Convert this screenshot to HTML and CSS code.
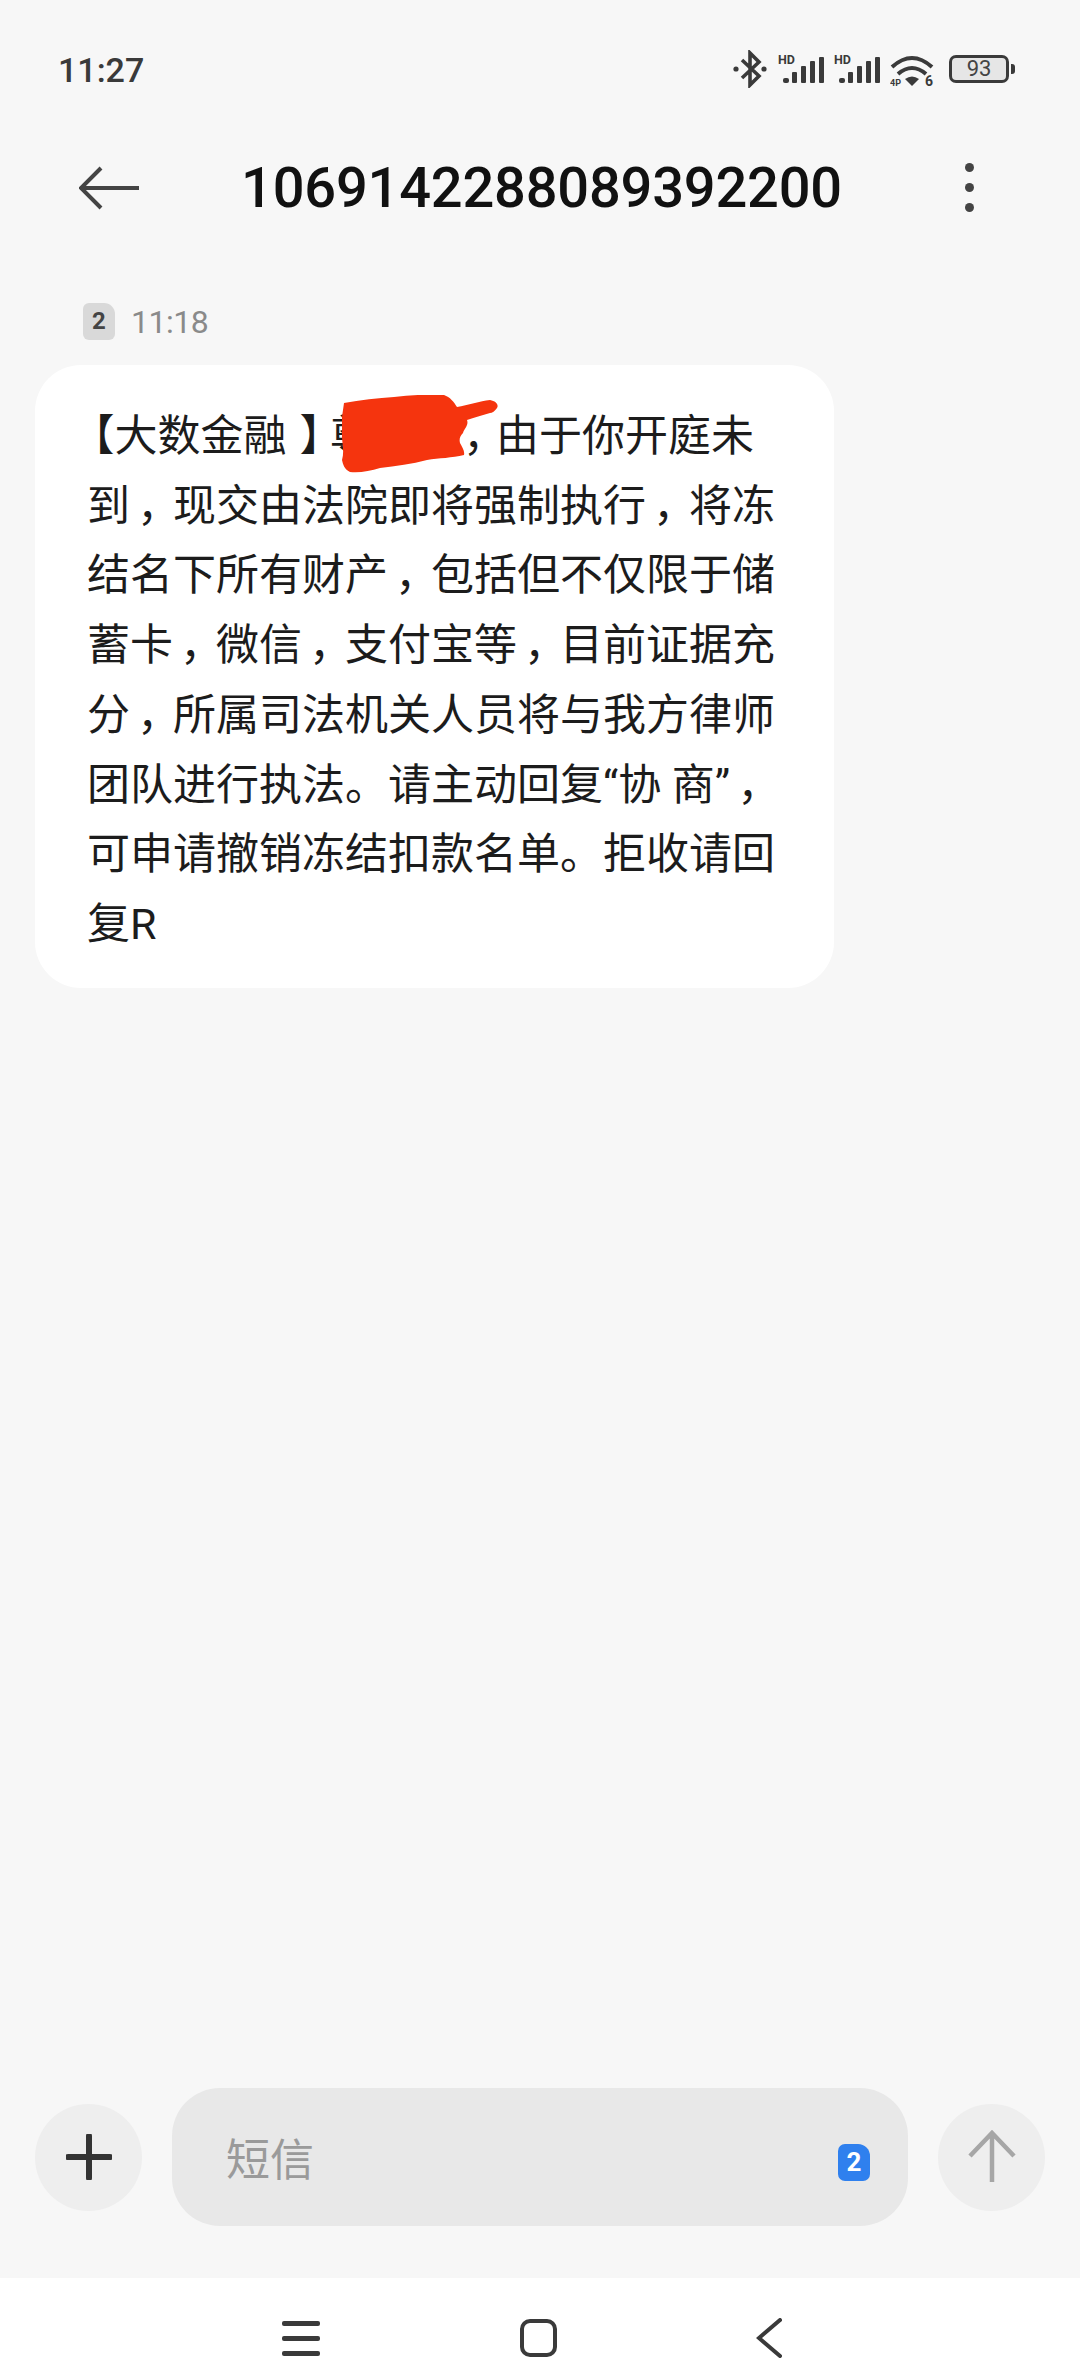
FILE: index.html
```html
<!DOCTYPE html>
<html lang="zh-CN">
<head>
  <meta charset="UTF-8" />
  <title>短信</title>
  <link rel="stylesheet" href="styles.css">
</head>
<body>

  <div class="phone">

    <div class="statusbar">
      <span class="clock">11:27</span>
      <div class="status-icons">
        <svg class="ic-bt" viewBox="0 0 34 38" width="34" height="38">
          <path d="M9 10 L26 26 L17 35 V3 L26 12 L9 28" fill="none" stroke="#3a3a3a" stroke-width="3.6"/>
          <circle cx="3" cy="19" r="2.6" fill="#3a3a3a"/>
          <circle cx="31" cy="19" r="2.6" fill="#3a3a3a"/>
        </svg>
        <svg class="ic-sig" viewBox="0 0 48 34" width="48" height="34">
          <text x="0" y="12" class="tiny-text">HD</text>
          <rect x="5" y="26" width="6" height="5" rx="2" fill="#3a3a3a"/>
          <rect x="14" y="20" width="5" height="11" rx="1" fill="#3a3a3a"/>
          <rect x="23" y="14" width="5" height="17" rx="1" fill="#3a3a3a"/>
          <rect x="32" y="9" width="5" height="22" rx="1" fill="#3a3a3a"/>
          <rect x="41" y="5" width="5" height="26" rx="1" fill="#3a3a3a"/>
        </svg>
        <svg class="ic-sig" viewBox="0 0 48 34" width="48" height="34">
          <text x="0" y="12" class="tiny-text">HD</text>
          <rect x="5" y="26" width="6" height="5" rx="2" fill="#3a3a3a"/>
          <rect x="14" y="20" width="5" height="11" rx="1" fill="#3a3a3a"/>
          <rect x="23" y="14" width="5" height="17" rx="1" fill="#3a3a3a"/>
          <rect x="32" y="9" width="5" height="22" rx="1" fill="#3a3a3a"/>
          <rect x="41" y="5" width="5" height="26" rx="1" fill="#3a3a3a"/>
        </svg>
        <svg class="ic-wifi" viewBox="0 0 46 42" width="46" height="42">
          <path d="M2 19 Q22 1 42 19" fill="none" stroke="#3a3a3a" stroke-width="4"/>
          <path d="M8 26 Q22 14 36 26" fill="none" stroke="#3a3a3a" stroke-width="4"/>
          <path d="M22 38 L15 31 Q22 26 29 31 Z" fill="#3a3a3a"/>
          <text x="0" y="38" class="micro-text">4P</text>
          <text x="35" y="38" class="small-text">6</text>
        </svg>
        <div class="battery">
          <div class="battery-body">93</div>
          <div class="battery-cap"></div>
        </div>
      </div>
    </div>

    <header class="topbar">
      <svg class="back" viewBox="0 0 62 44" width="62" height="44">
        <path d="M22 2 L2 22 L22 42 M2 22 H60" fill="none" stroke="#444" stroke-width="4"/>
      </svg>
      <h1>1069142288089392200</h1>
      <div class="more"><i></i><i></i><i></i></div>
    </header>

    <main class="thread">
      <div class="meta">
        <span class="sim-tag">2</span>
        <span class="time">11:18</span>
      </div>
      <div class="bubble">
        <div class="first-line">
          <span class="lbracket">【</span>大数金融<span class="rbracket">】</span><span class="hidden-name">尊</span><span class="name-comma">，</span>由于你开庭未
          <svg class="scribble" viewBox="0 0 156 78" width="156" height="78">
            <path d="M0 22 L2 8 C18 5 36 3 52 2 C70 0 88 -1 102 0 C108 2 112 7 115 12 C126 10 138 6 148 5 C154 6 157 10 155 13 C153 16 150 18 148 18 C140 20 132 23 125 25 C127 30 122 34 121 38 C118 41 117 44 118 48 C120 52 123 56 122 60 C110 63 97 63 85 65 C70 69 54 71 38 73 C28 76 18 78 8 77 C2 74 1 69 0 65 C3 55 -1 45 0 35 Z" fill="#f5340e"/>
          </svg>
        </div>
        <p>到<span class="cm">，</span>现交由法院即将强制执行<span class="cm">，</span>将冻<br>结名下所有财产<span class="cm">，</span>包括但不仅限于储<br>蓄卡<span class="cm">，</span>微信<span class="cm">，</span>支付宝等<span class="cm">，</span>目前证据充<br>分<span class="cm">，</span>所属司法机关人员将与我方律师<br>团队进行执法。请主动回复“协 商”<span class="cm">，</span><br>可申请撤销冻结扣款名单。拒收请回<br>复R</p>
      </div>
    </main>

    <div class="composer">
      <div class="round-btn">
        <svg viewBox="0 0 46 46" width="46" height="46">
          <path d="M23 2 V44 M2 23 H44" stroke="#333" stroke-width="6" stroke-linecap="round"/>
        </svg>
      </div>
      <div class="input">
        <span class="placeholder">短信</span>
        <span class="sim-badge">2</span>
      </div>
      <div class="round-btn">
        <svg viewBox="0 0 48 54" width="48" height="54">
          <path d="M24 3 V52 M2 26 L24 3 L46 26" fill="none" stroke="#a6a6a6" stroke-width="4.5"/>
        </svg>
      </div>
    </div>

    <nav class="navbar">
      <div class="nav-menu"><i></i><i></i><i></i></div>
      <div class="nav-home"></div>
      <svg class="nav-back" viewBox="0 0 26 40" width="26" height="40">
        <path d="M24 2 L3 20 L24 38" fill="none" stroke="#3a3a3a" stroke-width="4" stroke-linecap="round"/>
      </svg>
    </nav>

  </div>

</body>
</html>
```

FILE: styles.css
```css
* {
  box-sizing: border-box;
}

body {
  margin: 0;
  background: #f7f7f7;
  color: #1c1c1c;
  font-family: Roboto, "Noto Sans CJK SC", sans-serif;
}

.phone {
  width: 1080px;
  height: 2362px;
  display: flex;
  flex-direction: column;
  overflow: hidden;
}

/* Status bar */
.statusbar {
  height: 140px;
  padding: 50px 65px 0 58px;
  display: flex;
  justify-content: space-between;
  align-items: flex-start;
}

.clock {
  font-size: 34px;
  line-height: 40px;
  font-weight: 500;
  color: #3a3a3a;
}

.status-icons {
  display: flex;
  align-items: center;
  gap: 8px;
  height: 38px;
}

.ic-bt {
  margin-right: 3px;
}

.tiny-text {
  font: 700 12.5px Roboto, sans-serif;
  fill: #3a3a3a;
}

.micro-text {
  font: 700 9px Roboto, sans-serif;
  fill: #3a3a3a;
}

.small-text {
  font: 700 14px Roboto, sans-serif;
  fill: #3a3a3a;
}

.battery {
  display: flex;
  align-items: center;
  margin-left: 5px;
}

.battery-body {
  width: 60px;
  height: 28px;
  border: 3px solid #3a3a3a;
  border-radius: 7px;
  background: #e6e6e6;
  font-size: 22px;
  line-height: 22px;
  text-align: center;
  color: #444;
}

.battery-cap {
  width: 4px;
  height: 10px;
  margin-left: 2px;
  background: #3a3a3a;
  border-radius: 0 3px 3px 0;
}

/* Title row */
.topbar {
  height: 95px;
  padding: 0 106px 0 79px;
  display: flex;
  align-items: center;
}

.topbar h1 {
  margin: 0 0 0 100px;
  flex: 1;
  font-size: 56px;
  font-weight: 500;
  letter-spacing: -0.2px;
  color: #111;
  white-space: nowrap;
}

.more {
  display: flex;
  flex-direction: column;
  gap: 11px;
}

.more i {
  display: block;
  width: 9px;
  height: 9px;
  border-radius: 50%;
  background: #444;
}

/* Messages */
.thread {
  flex: 1;
  padding: 68px 0 0 35px;
}

.meta {
  display: flex;
  align-items: center;
  gap: 16px;
  height: 37px;
  margin-left: 48px;
}

.sim-tag {
  width: 32px;
  height: 37px;
  border-radius: 6px 11px 6px 6px;
  background: #d9d9d9;
  color: #444;
  font-size: 24px;
  font-weight: 700;
  line-height: 37px;
  text-align: center;
}

.time {
  font-size: 32px;
  letter-spacing: -0.5px;
  color: #8a8a8a;
}

.bubble {
  width: 799px;
  height: 623px;
  margin-top: 25px;
  padding: 37px 0 0 52px;
  background: #fff;
  border-radius: 46px;
  font-size: 43px;
  line-height: 69.7px;
  color: #1c1c1c;
}

.bubble p {
  margin: 0;
  white-space: nowrap;
}

.first-line {
  position: relative;
  white-space: nowrap;
}

/* half-width punctuation, the phone font sets these narrower than Noto */
.lbracket,
.rbracket,
.name-comma,
.cm {
  font-feature-settings: "halt";
}

.lbracket {
  margin-left: 6px;
}

.rbracket {
  margin: 0 9px 0 13px;
}

.hidden-name {
  display: inline-block;
  width: 133px;
}

.name-comma {
  margin-right: 11.5px;
}

.cm {
  margin: 0 14.5px 0 7px;
}

/* redaction scribble lies over the name */
.scribble {
  position: absolute;
  left: 255px;
  top: -7px;
}

/* Composer */
.composer {
  height: 138px;
  margin-bottom: 52px;
  padding: 0 35px;
  display: flex;
  align-items: center;
  gap: 30px;
}

.round-btn {
  flex: none;
  width: 107px;
  height: 107px;
  border-radius: 50%;
  background: #eeeeee;
  display: flex;
  align-items: center;
  justify-content: center;
}

.input {
  flex: 1;
  height: 138px;
  padding: 0 38px 0 54px;
  background: #e8e8e8;
  border-radius: 48px;
  display: flex;
  align-items: center;
  justify-content: space-between;
}

.placeholder {
  font-size: 44px;
  color: #9a9a9a;
}

.sim-badge {
  width: 32px;
  height: 37px;
  margin-top: 10px;
  border-radius: 7px 12px 7px 7px;
  background: #2f80ee;
  color: #fff;
  font-size: 26px;
  font-weight: 700;
  line-height: 37px;
  text-align: center;
}

/* Navigation bar */
.navbar {
  height: 84px;
  background: #fff;
  padding: 36px 298px 0 282px;
  display: flex;
  align-items: center;
  justify-content: space-between;
}

.nav-menu {
  width: 38px;
  display: flex;
  flex-direction: column;
  gap: 10px;
}

.nav-menu i {
  display: block;
  height: 5px;
  border-radius: 2px;
  background: #3a3a3a;
}

.nav-home {
  width: 37px;
  height: 38px;
  border: 4px solid #3a3a3a;
  border-radius: 10px;
}
```
